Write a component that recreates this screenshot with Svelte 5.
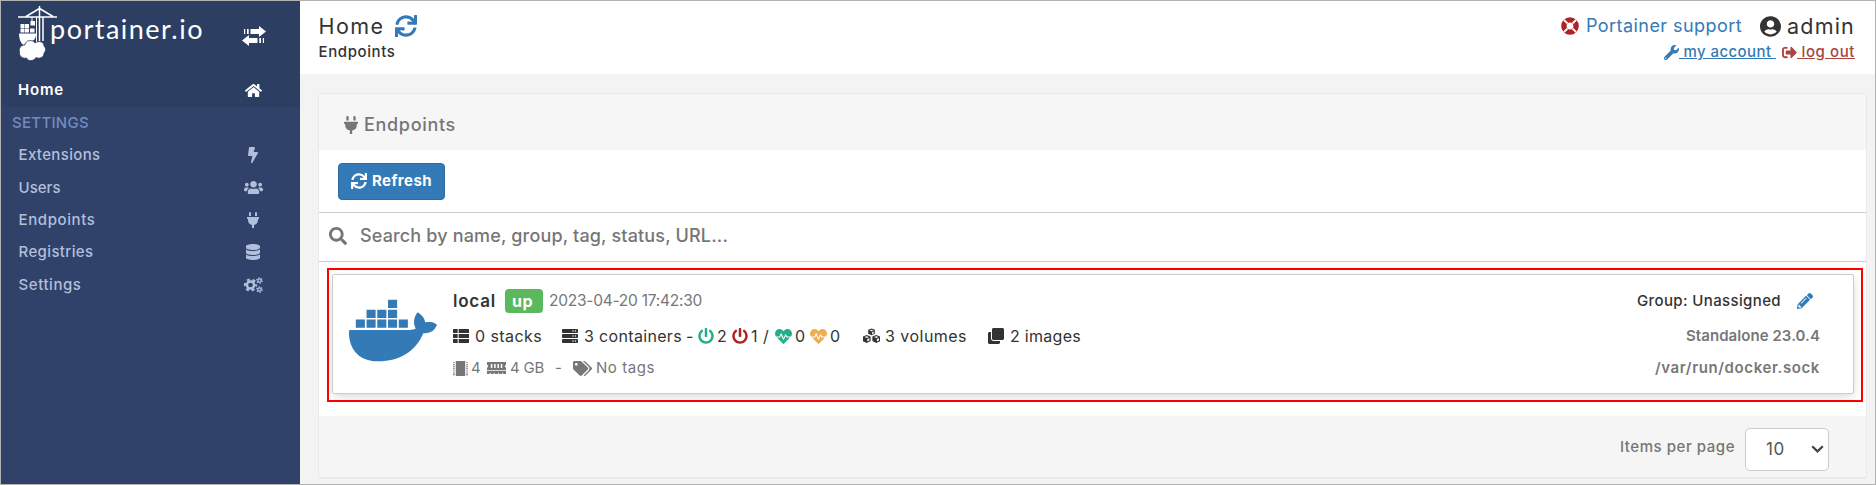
<script>
  const icons = {
    sync: [512, 512, 'M440.65 12.57l4 82.77A247.16 247.16 0 0 0 255.83 8C134.73 8 33.91 94.92 12.29 209.82A12 12 0 0 0 24.09 224h49.05a12 12 0 0 0 11.67-9.26 175.91 175.91 0 0 1 317-56.94l-101.46-4.86a12 12 0 0 0-12.57 12v47.41a12 12 0 0 0 12 12H500a12 12 0 0 0 12-12V12a12 12 0 0 0-12-12h-47.37a12 12 0 0 0-11.98 12.57zM255.83 432a175.61 175.61 0 0 1-146-77.8l101.8 4.87a12 12 0 0 0 12.57-12v-47.4a12 12 0 0 0-12-12H12a12 12 0 0 0-12 12V500a12 12 0 0 0 12 12h47.35a12 12 0 0 0 12-12.6l-4.15-82.57A247.17 247.17 0 0 0 255.83 504c121.11 0 221.93-86.92 243.55-201.82a12 12 0 0 0-11.8-14.18h-49.05a12 12 0 0 0-11.67 9.26A175.86 175.86 0 0 1 255.83 432z'],
    plug: [384, 512, 'M320,32a32,32,0,0,0-64,0v96h64Zm48,128H16A16,16,0,0,0,0,176v32a16,16,0,0,0,16,16H32v32A160.07,160.07,0,0,0,160,412.8V512h64V412.8A160.07,160.07,0,0,0,352,256V224h16a16,16,0,0,0,16-16V176A16,16,0,0,0,368,160ZM128,32a32,32,0,0,0-64,0v96h64Z'],
    bolt: [320, 512, 'M296 160H180.6l42.6-129.8C227.2 15 215.7 0 200 0H56C44 0 33.8 8.9 32.2 20.8l-32 240C-1.7 275.2 9.5 288 24 288h118.7L96.6 482.5c-3.6 15.2 8 29.5 23.3 29.5 8.4 0 16.4-4.4 20.8-12l176-304c9.3-15.9-2.2-36-20.7-36z'],
    users: [640, 512, 'M96 224c35.3 0 64-28.7 64-64s-28.7-64-64-64-64 28.7-64 64 28.7 64 64 64zm448 0c35.3 0 64-28.7 64-64s-28.7-64-64-64-64 28.7-64 64 28.7 64 64 64zm32 32h-64c-17.6 0-33.5 7.1-45.1 18.6 40.3 22.1 68.9 62 75.1 109.4h66c17.7 0 32-14.3 32-32v-32c0-35.3-28.7-64-64-64zm-256 0c61.9 0 112-50.1 112-112S381.9 32 320 32 208 82.1 208 144s50.1 112 112 112zm76.8 32h-8.3c-20.8 10-43.9 16-68.5 16s-47.6-6-68.5-16h-8.3C179.6 288 128 339.6 128 403.2V432c0 26.5 21.5 48 48 48h288c26.5 0 48-21.5 48-48v-28.8c0-63.6-51.6-115.2-115.2-115.2zm-223.7-13.4C161.5 263.1 145.6 256 128 256H64c-35.3 0-64 28.7-64 64v32c0 17.7 14.3 32 32 32h65.9c6.3-47.4 34.9-87.3 75.2-109.4z'],
    database: [448, 512, 'M448 73.143v45.714C448 159.143 347.667 192 224 192S0 159.143 0 118.857V73.143C0 32.857 100.333 0 224 0s224 32.857 224 73.143zM448 176v102.857C448 319.143 347.667 352 224 352S0 319.143 0 278.857V176c48.125 33.143 136.208 48.572 224 48.572S399.874 209.143 448 176zm0 160v102.857C448 479.143 347.667 512 224 512S0 479.143 0 438.857V336c48.125 33.143 136.208 48.572 224 48.572S399.874 369.143 448 336z'],
    home: [576, 512, 'M280.37 148.26L96 300.11V464a16 16 0 0 0 16 16l112.06-.29a16 16 0 0 0 15.92-16V368a16 16 0 0 1 16-16h64a16 16 0 0 1 16 16v95.64a16 16 0 0 0 16 16.05L464 480a16 16 0 0 0 16-16V300L295.67 148.26a12.19 12.19 0 0 0-15.3 0zM571.6 251.47L488 182.56V44.05a12 12 0 0 0-12-12h-56a12 12 0 0 0-12 12v72.61L318.47 43a48 48 0 0 0-61 0L4.34 251.47a12 12 0 0 0-1.6 16.9l25.5 31A12 12 0 0 0 45.15 301l235.22-193.74a12.19 12.19 0 0 1 15.3 0L530.9 301a12 12 0 0 0 16.9-1.6l25.5-31a12 12 0 0 0-1.7-16.93z'],
    search: [512, 512, 'M505 442.7L405.3 343c-4.5-4.5-10.6-7-17-7H372c27.6-35.3 44-79.7 44-128C416 93.1 322.9 0 208 0S0 93.1 0 208s93.1 208 208 208c48.3 0 92.7-16.4 128-44v16.3c0 6.4 2.5 12.5 7 17l99.7 99.7c9.4 9.4 24.6 9.4 33.9 0l28.3-28.3c9.4-9.4 9.4-24.6.1-34zM208 336c-70.7 0-128-57.2-128-128 0-70.7 57.2-128 128-128 70.7 0 128 57.2 128 128 0 70.7-57.2 128-128 128z'],
    list: [512, 512, 'M24 32h125v128H0V56a24 24 0 0 1 24-24zM181 32h307a24 24 0 0 1 24 24v104H181zM0 192h149v128H0zM181 192h331v128H181zM0 352h149v128H24a24 24 0 0 1-24-24zM181 352h331v104a24 24 0 0 1-24 24H181z'],
    server: [512, 512, 'M480 160H32c-17.673 0-32-14.327-32-32V64c0-17.673 14.327-32 32-32h448c17.673 0 32 14.327 32 32v64c0 17.673-14.327 32-32 32zm-48-88a24 24 0 1 0 0 48 24 24 0 0 0 0-48zm-80 0a24 24 0 1 0 0 48 24 24 0 0 0 0-48zM480 320H32c-17.673 0-32-14.327-32-32v-64c0-17.673 14.327-32 32-32h448c17.673 0 32 14.327 32 32v64c0 17.673-14.327 32-32 32zm-48-88a24 24 0 1 0 0 48 24 24 0 0 0 0-48zm-80 0a24 24 0 1 0 0 48 24 24 0 0 0 0-48zM480 480H32c-17.673 0-32-14.327-32-32v-64c0-17.673 14.327-32 32-32h448c17.673 0 32 14.327 32 32v64c0 17.673-14.327 32-32 32zm-48-88a24 24 0 1 0 0 48 24 24 0 0 0 0-48zm-80 0a24 24 0 1 0 0 48 24 24 0 0 0 0-48z'],
    power: [512, 512, 'M400 54.1c63 45 104 118.6 104 201.9 0 136.8-110.8 247.7-247.5 248C120 504.3 8.2 393 8 256.4 7.9 173.1 48.9 99.3 111.8 54.2c11.7-8.3 28-4.8 35 7.7L162.6 90c5.9 10.5 3.1 23.8-6.6 31-41.5 30.8-68 79.6-68 134.9-.1 92.3 74.5 168.1 168 168.1 91.6 0 168.6-74.2 168-169.1-.3-51.8-24.7-101.8-68.1-134-9.7-7.2-12.4-20.5-6.5-30.9l15.8-28.1c7-12.4 23.2-16.1 34.8-7.8zM296 264V24c0-13.3-10.7-24-24-24h-32c-13.3 0-24 10.7-24 24v240c0 13.3 10.7 24 24 24h32c13.3 0 24-10.7 24-24z'],
    heart: [512, 512, 'M320.2 243.8l-49.7 99.4c-6 12.1-23.4 11.7-28.9-.6l-56.9-126.3-30 71.7H60.6l182.5 186.5c7.1 7.3 18.6 7.3 25.7 0L451.4 288H342.3l-22.1-44.2zM473.7 73.9l-2.4-2.5c-51.5-52.6-135.8-52.6-187.4 0L256 100l-27.9-28.5c-51.5-52.7-135.9-52.7-187.4 0l-2.4 2.4C-10.4 123.7-12.5 203 31 256h102.4l35.9-86.2c5.4-12.9 23.6-13.1 29.3-.4l58.2 129.3 49-97.9c5.9-11.8 22.7-11.8 28.6 0l27.6 55.2H481c43.5-53 41.4-132.3-7.3-182.1z'],
    cubes: [512, 512, 'M256 18l100 40v128l-100 42-100-42V58zM256 52l-66 26 66 27 66-27zM274 136v62l50-21v-62zM112 222l118 46v148l-118 60L0 420V268zM112 262l-68 26 68 29 68-29zM130 352v76l64-34v-70zM400 222l112 46v152l-112 56-118-60V268zM400 262l-68 26 68 29 68-29zM418 352v76l64-34v-70z'],
    clone: [512, 512, 'M464 0c26.51 0 48 21.49 48 48v288c0 26.51-21.49 48-48 48H176c-26.51 0-48-21.49-48-48V48c0-26.51 21.49-48 48-48h288M176 416c-44.112 0-80-35.888-80-80V128H48c-26.51 0-48 21.49-48 48v288c0 26.51 21.49 48 48 48h288c26.51 0 48-21.49 48-48v-48H176z'],
    tags: [640, 512, 'M497.941 225.941L286.059 14.059A48 48 0 0 0 252.118 0H48C21.49 0 0 21.49 0 48v204.118a48 48 0 0 0 14.059 33.941l211.882 211.882c18.744 18.745 49.136 18.746 67.882 0l204.118-204.118c18.745-18.745 18.745-49.137 0-67.882zM112 160c-26.51 0-48-21.49-48-48s21.49-48 48-48 48 21.49 48 48-21.49 48-48 48zm513.941 133.823L421.823 497.941c-18.745 18.745-49.137 18.745-67.882 0l-.36-.36L527.64 323.522c16.999-16.999 26.36-39.6 26.36-63.64s-9.362-46.641-26.36-63.64L331.397 0h48.721a48 48 0 0 1 33.941 14.059l211.882 211.882c18.745 18.745 18.745 49.137 0 67.882z'],
    pencil: [512, 512, 'M497.9 142.1l-46.1 46.1c-4.7 4.7-12.3 4.7-17 0l-111-111c-4.7-4.7-4.7-12.3 0-17l46.1-46.1c18.7-18.7 49.1-18.7 67.9 0l60.1 60.1c18.8 18.7 18.8 49.1 0 67.9zM284.2 99.8L21.6 362.4.4 483.9c-2.9 16.4 11.4 30.6 27.8 27.8l121.5-21.3 262.6-262.6c4.7-4.7 4.7-12.3 0-17l-111-111c-4.8-4.7-12.4-4.7-17.1 0zM124.1 339.9c-5.5-5.5-5.5-14.3 0-19.8l154-154c5.5-5.5 14.3-5.5 19.8 0s5.5 14.3 0 19.8l-154 154c-5.5 5.5-14.3 5.5-19.8 0zM88 424h48v36.3l-64.5 11.3-31.1-31.1L51.7 376H88v48z'],
    wrench: [512, 512, 'M507.73 109.1c-2.24-9.03-13.54-12.09-20.12-5.51l-74.36 74.36-67.88-11.31-11.31-67.88 74.36-74.36c6.62-6.62 3.43-17.9-5.66-20.16-47.38-11.74-99.55.91-136.58 37.93-39.64 39.64-50.55 97.1-34.05 147.2L18.74 402.76c-24.99 24.99-24.99 65.51 0 90.5 24.99 24.99 65.51 24.99 90.5 0l213.21-213.21c50.12 16.71 107.47 5.68 147.37-34.22 37.07-37.07 49.7-89.32 37.91-136.73zM64 472c-13.25 0-24-10.75-24-24 0-13.26 10.75-24 24-24s24 10.74 24 24c0 13.25-10.75 24-24 24z'],
    signout: [512, 512, 'M497 273L329 441c-15 15-41 4.5-41-17v-96H152c-13.3 0-24-10.7-24-24v-96c0-13.3 10.7-24 24-24h136V88c0-21.4 25.9-32 41-17l168 168c9.3 9.4 9.3 24.6 0 34zM192 436v-40c0-6.6-5.4-12-12-12H96c-17.7 0-32-14.3-32-32V160c0-17.7 14.3-32 32-32h84c6.6 0 12-5.4 12-12V76c0-6.6-5.4-12-12-12H96c-53 0-96 43-96 96v192c0 53 43 96 96 96h84c6.6 0 12-5.4 12-12z'],
    user: [496, 512, 'M248 8C111 8 0 119 0 256s111 248 248 248 248-111 248-248S385 8 248 8zm0 96c48.6 0 88 39.4 88 88s-39.4 88-88 88-88-39.4-88-88 39.4-88 88-88zm0 344c-58.7 0-111.3-26.6-146.5-68.2 18.8-35.4 55.6-59.8 98.5-59.8 2.4 0 4.8.4 7.1 1.1 13 4.2 26.6 6.9 40.9 6.9 14.3 0 28-2.7 40.9-6.9 2.3-.7 4.7-1.1 7.1-1.1 42.9 0 79.7 24.4 98.5 59.8C359.3 421.4 306.7 448 248 448z'],
    docker: [640, 512, 'M349.9 236.3h-66.1v-59.4h66.1v59.4zm0-204.3h-66.1v60.7h66.1V32zm78.2 144.8H362v59.4h66.1v-59.4zm-156.3-72.1h-66.1v60.1h66.1v-60.1zm78.1 0h-66.1v60.1h66.1v-60.1zm276.8 100c-14.4-9.7-47.6-13.2-73.1-8.4-3.3-24-16.7-44.9-41.1-63.7l-14-9.3-9.3 14c-18.4 27.8-23.4 73.6-3.7 103.8-8.7 4.7-25.8 11.1-48.4 10.7H2.4c-8.7 50.8 5.8 116.8 44 162.1 37.1 43.9 92.7 66.2 165.4 66.2 157.4 0 273.9-72.5 328.4-204.2 21.4.4 67.6.1 91.3-45.2 1.5-2.5 6.6-13.2 8.5-17.1l-13.3-8.9zm-511.1-27.9h-66v59.4h66.1v-59.4zm78.1 0h-66.1v59.4h66.1v-59.4zm78.1 0h-66.1v59.4h66.1v-59.4zm-78.1-72.1h-66.1v60.1h66.1v-60.1z'],
    chip: [16, 16, 'M3 0h10v16H3zM0 1.2h2v1H0zM0 3.4h2v1H0zM0 5.6h2v1H0zM0 7.8h2v1H0zM0 10h2v1H0zM0 12.2h2v1H0zM0 14.2h2v1H0zM14 1.2h2v1h-2zM14 3.4h2v1h-2zM14 5.6h2v1h-2zM14 7.8h2v1h-2zM14 10h2v1h-2zM14 12.2h2v1h-2zM14 14.2h2v1h-2z'],
    memory: [20, 12, 'M0 0h20v3a1.2 1.2 0 0 0 0 2.4V8H0V5.4A1.2 1.2 0 0 0 0 3zM4 2v4h1.6V2zM7.5 2v4h1.6V2zM11 2v4h1.6V2zM14.500 2v4h1.600V2zM0 8.800h20V12h-3v-1.200h-1V12h-3.500v-1.200h-1V12H8v-1.200H7V12H4v-1.200H3V12H0z'],
    toggle: [24, 20, 'M2 3h1.2v5H2zM5 3h1.700v5H5zM8.500 3H17V0l7 5.500-7 5.500V8H8.500zM22 12h-1.200v5H22zM19 12h-1.700v5H19zM15.500 12H7V9l-7 5.500L7 20v-3h8.500z'],
  };

  const menu = [
    { label: 'Extensions', w: 82, icon: 'bolt', iw: 10, ih: 16 },
    { label: 'Users', w: 42, icon: 'users', iw: 19, ih: 15 },
    { label: 'Endpoints', w: 77, icon: 'plug', iw: 12, ih: 16 },
    { label: 'Registries', w: 75, icon: 'database', iw: 14, ih: 16 },
    { label: 'Settings', w: 63, icon: 'cogs', iw: 19, ih: 16 },
  ];

  // Tracks a label out so that it fills its slot exactly.
  function fit(node, width) {
    const natural = node.getBoundingClientRect().width;
    const count = node.textContent.length;
    node.style.letterSpacing = `${(width - natural) / count}px`;
  }
</script>

{#snippet T(text, w, gap = 0, cls = '')}
  <span class="t {cls}" style:margin-left="{gap}px" use:fit={w}>{text}</span>
{/snippet}

{#snippet I(name, w, h, gap = 0, cls = '')}
  {#if name === 'cogs'}
    <svg class={cls} width={w} height={h} viewBox="0 0 38 32" fill="none" stroke="currentColor" style:margin-left="{gap}px">
      <circle cx="13" cy="16" r="7.2" stroke-width="5" />
      <circle cx="13" cy="16" r="11" stroke-width="4.6" stroke-dasharray="5.8 5.72" stroke-dashoffset="2.9" />
      <circle cx="31" cy="7" r="3.3" stroke-width="2.6" />
      <circle cx="31" cy="7" r="5.3" stroke-width="2.6" stroke-dasharray="2.8 2.75" />
      <circle cx="31" cy="25" r="3.3" stroke-width="2.6" />
      <circle cx="31" cy="25" r="5.3" stroke-width="2.6" stroke-dasharray="2.8 2.75" />
    </svg>
  {:else}
    <svg class={cls} width={w} height={h} viewBox="0 0 {icons[name][0]} {icons[name][1]}" preserveAspectRatio={name === 'docker' ? 'xMidYMid' : 'none'} fill="currentColor" fill-rule="evenodd" style:margin-left="{gap}px">
      <path d={icons[name][2]} />
    </svg>
  {/if}
{/snippet}

<div class="app">
  <aside>
    <div class="top">
      <div class="brand">
        <svg width="40" height="55" viewBox="0 0 40 55" fill="none" stroke="#fff">
          <path d="M0 11h39M21.5 0v35M25 11v24M21.5 2.5L8 10.500M21.500 2.500L35 10.500" stroke-width="1.5" />
          <path d="M18.500 11v26M14 11v5" stroke-width="1" />
          <path fill="#fff" stroke="none" d="M12.500 15h4.500v4.500h-4.500zM2.500 18h4v4h-4zM7 18h4v4H7zM2.500 22.500h4v4h-4zM7 22.500h4v4H7zM12 22.500h4.500v4H12zM1 27.500h17c0 5-2 7-4 7.500-5 0-5 3.500-8.500 4-3-2-4.500-6-4.500-11.500z" />
          <path fill="#fff" stroke="#2d3e63" stroke-width=".8" d="M7 39c0-5 8-6 10-2 4-3 9-1 9 3 2 2 2 5 0 7 0 5-5 6-8 4.500-2 4-8 4-9.500.5C4 53 1 50 1.500 46 .500 42 3 39 7 39z" />
        </svg>
        <span class="wordmark" use:fit={154}>portainer.io</span>
        {@render I('toggle', 24, 20, 38)}
      </div>
      <div class="item active">
        {@render T('Home', 46)}
        <i>{@render I('home', 17, 15)}</i>
      </div>
    </div>
    <div class="section">{@render T('SETTINGS', 77)}</div>
    {#each menu as m}
      <div class="item">
        {@render T(m.label, m.w)}
        <i>{@render I(m.icon, m.iw, m.ih)}</i>
      </div>
    {/each}
  </aside>

  <main>
    <header>
      <div class="title">
        <div class="line big">{@render T('Home', 66)}{@render I('sync', 22, 22, 10, 'blue')}</div>
        <div class="line small">{@render T('Endpoints', 77)}</div>
      </div>
      <div class="account">
        <div class="line big">
          <svg width="18" height="18" viewBox="0 0 18 18" fill="none">
            <circle cx="9" cy="9" r="6.100" stroke="#ae2323" stroke-width="5.400" />
            <path d="M2.900 2.900l3.500 3.500M15.100 2.900l-3.500 3.500M2.900 15.100l3.500-3.500M15.100 15.100l-3.500-3.500" stroke="#fff" stroke-width="2" />
          </svg>
          {@render T('Portainer support', 156, 7, 'support')}
          {@render I('user', 21, 21, 18)}
          {@render T('admin', 68, 6)}
        </div>
        <div class="line small">
          {@render I('wrench', 15, 15, 0, 'blue')}
          <a class="blue" href="#account" use:fit={97}>&nbsp;my account&nbsp;</a>
          {@render I('signout', 15, 15, 6, 'logout')}
          <a class="logout" href="#logout" use:fit={58}>&nbsp;log out</a>
        </div>
      </div>
    </header>

    <section class="widget">
      <div class="widget-head">{@render I('plug', 14, 18)}{@render T('Endpoints', 92, 6)}</div>
      <div class="toolbar">
        <button>{@render I('sync', 16, 16)}{@render T('Refresh', 60, 5)}</button>
      </div>
      <div class="search">{@render I('search', 18, 18)}{@render T('Search by name, group, tag, status, URL...', 368, 13)}</div>
      <div class="highlight">
        <div class="card">
          {@render I('docker', 88, 71, 0, 'blue')}
          <div class="info">
            <div class="row r1">
              {@render T('local', 43, 0, 'name')}
              <span class="badge">{@render T('up', 21)}</span>
              {@render T('2023-04-20 17:42:30', 153, 6, 'muted')}
            </div>
            <div class="row r2">
              {@render I('list', 16, 16)}{@render T('0 stacks', 67, 6)}
              {@render I('server', 16, 16, 20)}{@render T('3 containers', 98, 6)}{@render T('-', 8, 4)}
              {@render I('power', 16, 16, 4, 'green')}{@render T('2', 11, 3)}
              {@render I('power', 16, 16, 4, 'red')}{@render T('1', 8, 3)}{@render T('/', 8, 4)}
              {@render I('heart', 17, 17, 4, 'green')}{@render T('0', 11, 3)}
              {@render I('heart', 17, 17, 4, 'orange')}{@render T('0', 11, 3)}
              {@render I('cubes', 17, 16, 22)}{@render T('3 volumes', 82, 5)}
              {@render I('clone', 16, 16, 21)}{@render T('2 images', 71, 6)}
            </div>
            <div class="row r3 muted">
              {@render I('chip', 15, 15)}{@render T('4', 10, 3)}
              {@render I('memory', 19, 12, 6)}{@render T('4 GB', 34, 4)}{@render T('-', 7, 11)}
              {@render I('tags', 19, 15, 11)}{@render T('No tags', 59, 4)}
            </div>
          </div>
          <div class="side">
            <div class="row r1 group">{@render T('Group: Unassigned', 144)}{@render I('pencil', 16, 16, 16, 'blue')}</div>
            <div class="row r2 muted">{@render T('Standalone 23.0.4', 134)}</div>
            <div class="row r3 muted">{@render T('/var/run/docker.sock', 165)}</div>
          </div>
        </div>
      </div>
      <footer>
        {@render T('Items per page', 115)}
        <div class="select">
          {@render T('10', 19)}
          <svg width="13" height="8" viewBox="0 0 13 8" fill="none" stroke="#444" stroke-width="2.200"><path d="M1.200 1.200l5.300 5.200 5.300-5.200" /></svg>
        </div>
      </footer>
    </section>
  </main>
</div>

<style>
  :global(body) { margin: 0; }
  .app {
    box-sizing: border-box;
    width: 1876px;
    height: 485px;
    border: 1px solid #b2b2b2;
    display: flex;
    overflow: hidden;
    background: #f3f3f3;
    color: #333;
    font-family: Inter, "Open Sans", sans-serif;
    font-size: 15px;
    line-height: 20px;
    white-space: nowrap;
  }
  svg { display: block; flex: none; }
  .t { display: inline-block; flex: none; }
  .blue { color: #337ab7; }
  .green { color: #23ae89; }
  .red { color: #ae2323; }
  .orange { color: #f0ad4e; }
  .logout { color: #a94442; }
  .muted { color: #777; }

  aside { flex: none; width: 299px; background: #30426a; color: #b2bfdc; font-weight: 500; }
  .top { height: 106px; background: #2d3e63; color: #fff; }
  .brand { height: 73px; display: flex; align-items: flex-start; padding: 5px 0 0 17px; box-sizing: border-box; }
  .brand > :global(svg:last-child) { margin-top: 20px; }
  .wordmark { margin: 8px 0 0 -8px; font: 400 27px/30px Lato, sans-serif; }
  .item { height: 32.4px; display: flex; align-items: center; justify-content: space-between; padding: 0 36px 0 17.5px; }
  .item i { width: 22px; display: flex; justify-content: center; }
  .item.active { padding-left: 17px; font-weight: 600; }
  .section { height: 32px; display: flex; align-items: center; padding-left: 11px; color: #738bc0; font-weight: 450; }

  main { flex: 1; min-width: 0; }
  header { height: 73px; background: #fff; display: flex; justify-content: space-between; padding: 0 20px 0 18.500px; box-sizing: border-box; }
  .line { display: flex; align-items: center; }
  .big { height: 28px; padding-top: 11px; font-size: 21.500px; justify-content: flex-end; }
  .title .big { justify-content: flex-start; }
  .small { height: 24px; font-size: 15px; font-weight: 450; }
  .account .small { justify-content: flex-end; }
  .account :global(.support) { font-size: 18px; color: #337ab7; }

  .widget { box-sizing: border-box; width: 1549px; height: 386px; margin: 19px 0 0 18px; border: 1px solid #e9e9e9; border-bottom-width: 2px; background: #fff; border-radius: 2px; }
  .widget-head { height: 56px; padding: 5px 0 0 25px; box-sizing: border-box; display: flex; align-items: center; background: #f6f6f6; color: #767676; font-size: 18px; font-weight: 450; }
  .toolbar { height: 62px; padding: 13px 19px 0; box-sizing: border-box; }
  button { display: flex; align-items: center; width: 107px; height: 37px; padding: 0 0 2px 12px; border: 1px solid #2e6da4; border-radius: 4px; background: #337ab7; color: #fff; font: 700 15px/20px Inter, sans-serif; white-space: nowrap; }
  .search { height: 50px; padding: 0 0 3px 10px; box-sizing: border-box; display: flex; align-items: center; border: solid #ccc; border-width: 1px 0; color: #767676; font-size: 18px; font-weight: 450; }
  .highlight { box-sizing: border-box; width: 1536px; height: 134px; margin: 6px 0 0 8px; padding: 4px 7px 6px 3px; border: 2px solid #f00; }
  .card { box-sizing: border-box; height: 120px; display: flex; align-items: flex-start; border: 1px solid #ccc; border-radius: 2px; box-shadow: 0 3px 10px -2px rgba(0, 0, 0, .2); padding: 0 33px 0 16px; }
  .card > :global(svg) { margin-top: 20px; }
  .info { flex: 1; padding: 9px 0 0 16px; }
  .side { padding-top: 9px; font-weight: 600; }
  .row { display: flex; align-items: center; font-size: 16px; }
  .r1 { height: 34px; }
  .r2 { height: 36px; }
  .r3 { height: 28px; }
  .r1 :global(.muted) { font-size: 15.500px; }
  .side .row { justify-content: flex-end; font-size: 15px; }
  .side .group { font-weight: 500; padding-right: 7px; }
  .row :global(.name) { font-weight: 600; font-size: 17px; }
  .r3 { font-size: 15px; }
  .badge { display: flex; align-items: center; justify-content: flex-start; box-sizing: border-box; width: 38px; height: 24px; padding-left: 7px; margin-left: 9px; border-radius: 4px; background: #5cb85c; color: #fff; font-weight: 700; }
  footer { height: 61px; margin-top: 14px; padding-right: 37px; display: flex; align-items: center; justify-content: flex-end; background: #f5f5f5; color: #767676; font-weight: 500; }
  .select { box-sizing: border-box; width: 84px; height: 43px; margin: 5px 0 0 10px; padding: 0 4px 0 20px; display: flex; align-items: center; justify-content: space-between; border: 1px solid #ccc; border-radius: 5px; background: #fff; color: #555; font-weight: 400; font-size: 17px; }
</style>
